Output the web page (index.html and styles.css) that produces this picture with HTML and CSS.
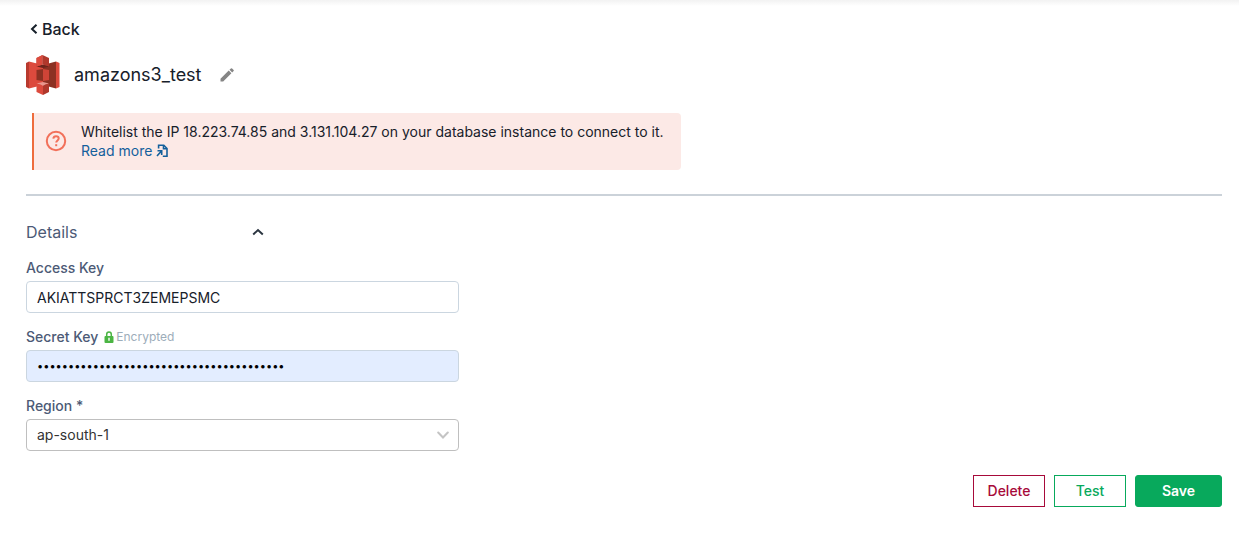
FILE: index.html
```html
<!DOCTYPE html>
<html lang="en">
<head>
<meta charset="utf-8">
<meta name="viewport" content="width=device-width, initial-scale=1">
<title>amazons3_test</title>
<link rel="stylesheet" href="styles.css">
</head>
<body>
<main class="page">
  <a class="back" href="#">
    <svg width="8" height="12" viewBox="0 0 8 12" fill="none" stroke="currentColor" stroke-width="2"><path d="M6.500 1.700 2 6l4.500 4.300"/></svg>
    Back
  </a>

  <header class="title-row">
    <svg class="logo" width="34" height="40" viewBox="0 0 34 40" aria-hidden="true">
      <path fill="#b83a2e" d="M0 8 3 6.500v27L0 32z"/>
      <path fill="#dc4a3d" d="M3 6.500 17 10v20L3 33.500z"/>
      <path fill="#8c3123" d="M17 10 30 6.500v27L17 30z"/>
      <path fill="#dc4a3d" d="m30 6.500 3.500 1.500v24L30 33.500z"/>
      <path fill="#6e241c" d="m17 9.500-6.500 2L17 13l6.500-1.500z"/>
      <path fill="#8c3123" d="m10.500 15 6.500-1v12l-6.500-1z"/>
      <path fill="#cf4437" d="m23 15-6-1v12l6-1z"/>
      <path fill="#b83a2e" d="m16.500 0-6 3v8.500l6-2z"/>
      <path fill="#dc4a3d" d="m10.500 3 6-3v9.500l-6 2z"/>
      <path fill="#b0382c" d="m16.500 0 6.500 3v8.500l-6.500-2z"/>
      <path fill="#e9968d" d="m10.500 28.500 6.500-1.500 6 1.500-6 2z"/>
      <path fill="#dc4a3d" d="m10.500 28.500 6.500 2V40l-6.500-3z"/>
      <path fill="#b0382c" d="m23 28.500-6 2V40l6-3z"/>
    </svg>
    <h1 class="title">amazons3_test</h1>
    <button class="icon-button" type="button" aria-label="Edit name">
      <svg width="14" height="14" viewBox="0 0 14 14" fill="#858585"><path d="M.5 10.800 8.700 2.600l2.700 2.700L3.200 13.500H.5zM9.500 1.800 10.900.4q.6-.5 1.200 0l1.500 1.500q.5.600 0 1.200l-1.400 1.400z"/></svg>
    </button>
  </header>

  <section class="notice">
    <svg class="notice-icon" width="22" height="22" viewBox="0 0 22 22" fill="none" stroke="#f2705a" stroke-width="2"><circle cx="11" cy="11" r="9.200"/><path d="M8.300 8.700C8.500 6.900 9.600 6.200 11 6.200c1.600 0 2.700.9 2.700 2.300 0 1.900-2.500 2-2.500 4.100"/><path d="M10.200 15.200h2"/></svg>
    <p class="notice-text">Whitelist the IP 18.223.74.85 and 3.131.104.27 on your database instance to connect to it.
      <a class="read-more" href="#">Read more
        <svg width="12" height="14" viewBox="0 0 12 14" fill="none" stroke="currentColor" stroke-width="1.600"><path d="M2.600 4.500V1.300h5.200l3.200 3.200v7.700H6.800"/><path d="M7.500 1.500v3.300h3.300M1.500 6.700h4.200v4.200M5.500 7 1 12"/></svg>
      </a>
    </p>
  </section>

  <hr class="divider">

  <form class="form">
    <button class="section-toggle" type="button" aria-expanded="true">Details
      <svg width="12" height="8" viewBox="0 0 12 8" fill="none" stroke="#2b3540" stroke-width="2"><path d="M1.200 6.500 6 2l4.800 4.500"/></svg>
    </button>

    <div class="field">
      <label class="label" for="access">Access Key</label>
      <input class="control" id="access" type="text" value="AKIATTSPRCT3ZEMEPSMC">
    </div>

    <div class="field">
      <div class="label-row">
        <label class="label" for="secret">Secret Key</label>
        <span class="encrypted">
          <svg width="10" height="12" viewBox="0 0 10 12"><path d="M2.700 6V3.400a2.300 2.300 0 0 1 4.600 0V6" fill="none" stroke="#4bb543" stroke-width="1.500"/><rect x=".5" y="5" width="9" height="7" rx="1" fill="#4bb543"/><path d="M5 6.800v3" stroke="#fff" stroke-width="1.400"/></svg>
          Encrypted
        </span>
      </div>
      <input class="control autofilled" id="secret" type="password" value="0123456789012345678901234567890123456789">
    </div>

    <div class="field">
      <label class="label" for="region">Region *</label>
      <div class="select">
        <select class="control region" id="region"><option>ap-south-1</option></select>
        <svg class="chevron" width="12" height="8" viewBox="0 0 12 8" fill="none" stroke="#c4c4c4" stroke-width="2" stroke-linecap="round"><path d="m1.200 1.500 4.800 5 4.800-5"/></svg>
      </div>
    </div>

    <div class="actions">
      <button class="button danger" type="button">Delete</button>
      <button class="button outline" type="button">Test</button>
      <button class="button primary" type="submit">Save</button>
    </div>
  </form>
</main>
</body>
</html>
```
FILE: styles.css
```css
* { box-sizing: border-box; }

body {
  margin: 0;
  background: linear-gradient(#f2f2f2, #fff 6px) no-repeat #fff;
  color: #17202a;
  font: 14px/20px Inter, "Liberation Sans", sans-serif;
}

button, input, select { font: inherit; color: inherit; }
button { padding: 0; border: 0; background: none; cursor: pointer; }
svg { display: block; flex: none; }

.page { padding: 19px 17px 32px 26px; }

.back {
  display: flex;
  align-items: center;
  gap: 4px;
  width: max-content;
  padding-left: 4px;
  color: #17202a;
  font-size: 16px;
  font-weight: 500;
  text-decoration: none;
}

.title-row { display: flex; align-items: center; margin-top: 16px; }
.title { margin: 0 18px 0 14px; font-size: 18px; line-height: 24px; font-weight: 400; }

.notice {
  display: flex;
  align-items: center;
  gap: 14px;
  width: max-content;
  max-width: 100%;
  margin: 18px 0 0 6px;
  padding: 9px 17px 10px 11px;
  border-left: 2px solid #ee6c3d;
  border-radius: 0 4px 4px 0;
  background: #fce9e6;
}
.notice-text { margin: 0; line-height: 19px; }
.read-more { display: flex; align-items: center; gap: 4px; width: max-content; color: #14609c; text-decoration: none; }

.divider { height: 2px; margin: 24px 0 26px; border: 0; background: #cbd2d9; }

.form { display: flex; flex-direction: column; }
.section-toggle {
  display: flex;
  align-items: center;
  justify-content: space-between;
  width: 238px;
  margin-bottom: 16px;
  color: #4c5a76;
  font-size: 16px;
}

.field { display: flex; flex-direction: column; gap: 3px; width: 433px; max-width: 100%; margin-bottom: 14px; }
.label { color: #4c5a76; font-weight: 500; }
.label-row { display: flex; align-items: center; gap: 6px; }
.encrypted { display: flex; align-items: center; gap: 2px; color: #9dadba; font-size: 12px; }

.control {
  width: 100%;
  height: 32px;
  padding: 0 10px;
  border: 1px solid #cbd6e0;
  border-radius: 4px;
  background: #fff;
}
.autofilled { background: #e3edff; color: #000; font-size: 11px; }
.select { display: grid; align-items: center; }
.select > * { grid-area: 1 / 1; }
.region { appearance: none; border-color: #bfbfbf; color: #333; }
.chevron { justify-self: end; margin-right: 10px; pointer-events: none; }

.actions { display: flex; justify-content: flex-end; gap: 9px; margin-top: 10px; }
.button { min-width: 72px; height: 32px; border: 1px solid; font-weight: 500; }
.danger { color: #a70a3a; }
.outline { color: #08a95c; }
.primary { min-width: 87px; border-color: #08a95c; border-radius: 3px; background: #08a95c; color: #fff; font-weight: 600; }
```
